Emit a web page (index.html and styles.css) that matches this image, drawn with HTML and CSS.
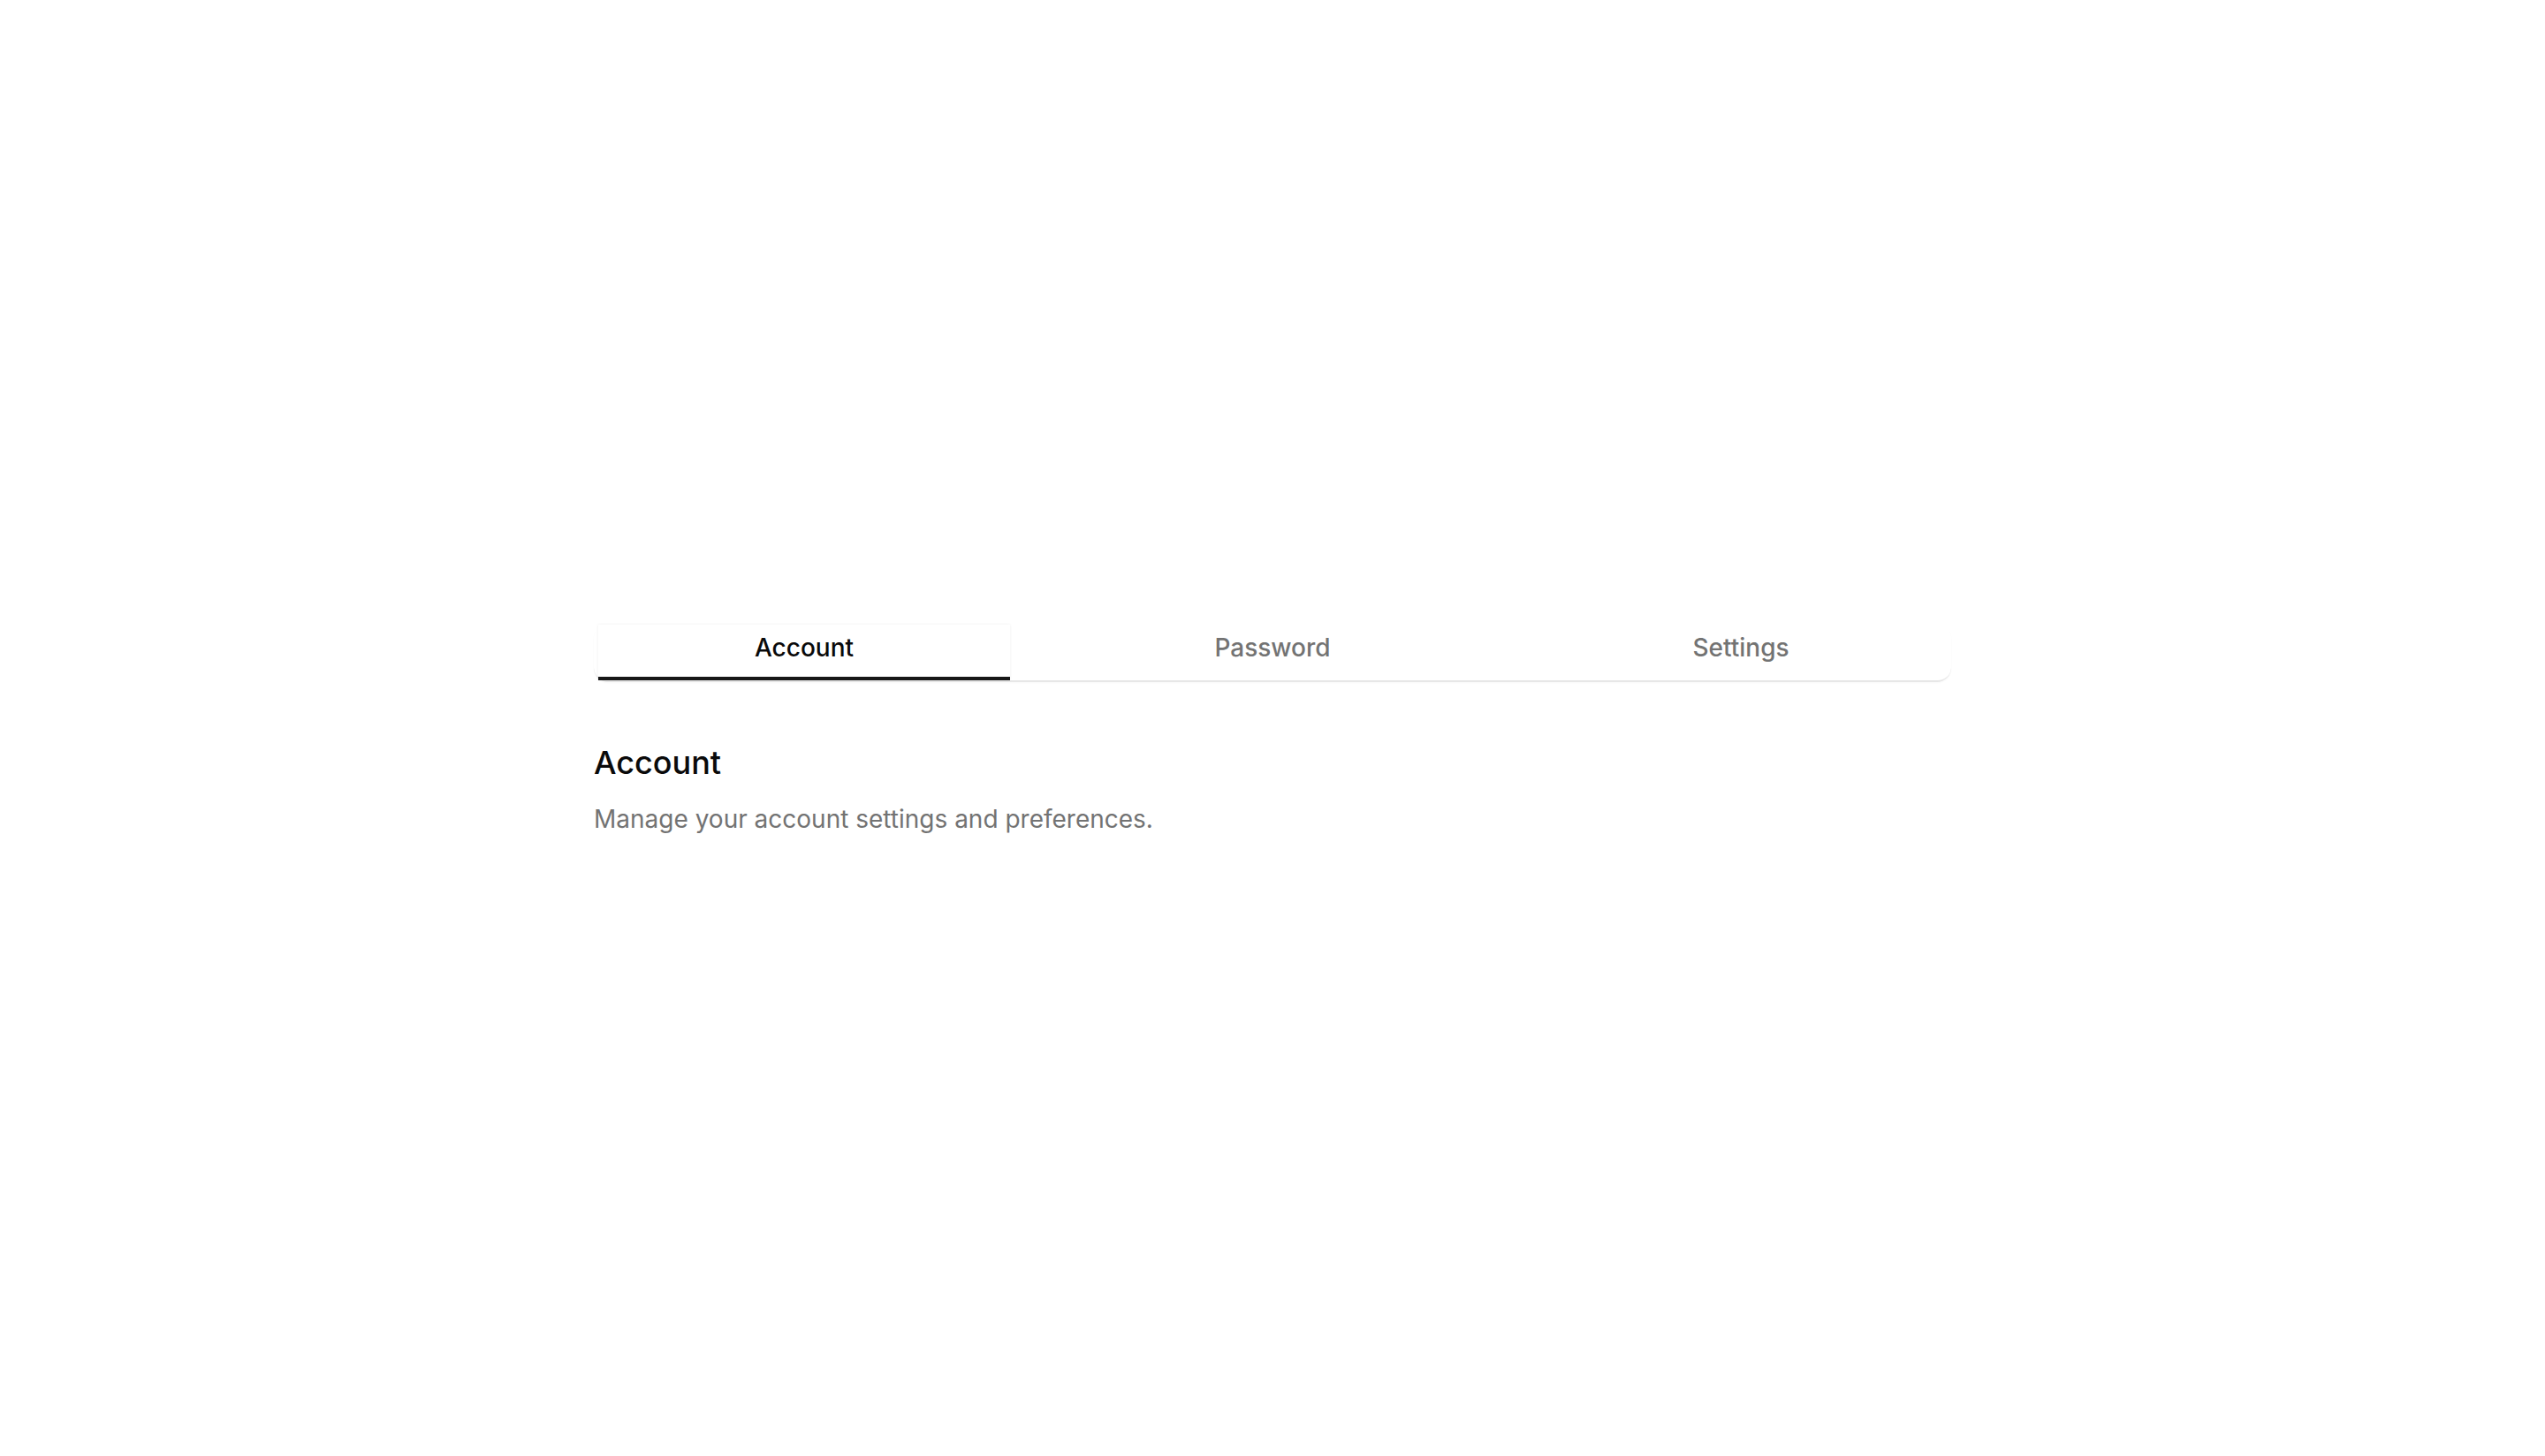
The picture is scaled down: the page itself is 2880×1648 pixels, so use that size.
FILE: index.html
```html
<!DOCTYPE html>
<html lang="en">
<head>
<meta charset="utf-8">
<title>Tabs</title>
<link rel="stylesheet" href="styles.css">
</head>
<body>
<main class="page">
  <div class="tabs">
    <div class="tab-list" role="tablist">
      <button class="tab tab-active" role="tab" aria-selected="true">Account</button>
      <button class="tab" role="tab" aria-selected="false">Password</button>
      <button class="tab" role="tab" aria-selected="false">Settings</button>
    </div>
    <section class="panel" role="tabpanel">
      <h2 class="panel-title">Account</h2>
      <p class="panel-desc">Manage your account settings and preferences.</p>
    </section>
  </div>
</main>
</body>
</html>
```
FILE: styles.css
```css
html, body {
  margin: 0;
  padding: 0;
  background: #ffffff;
}

body {
  font-family: Inter, "Liberation Sans", sans-serif;
  color: #0a0a0a;
}

.page {
  padding-top: 707px;
  display: flex;
  justify-content: center;
}

.tabs {
  width: 1536px;
  display: flex;
  flex-direction: column;
}

.tab-list {
  display: flex;
  gap: 64px;
  padding: 0 5px;
  border-bottom: 2px solid #e7e7e7;
  border-radius: 16px;
  box-shadow: 0 1px 2px rgba(0, 0, 0, 0.03);
}

.tab {
  flex: 1 1 0;
  appearance: none;
  background: transparent;
  border: 0;
  border-bottom: 4px solid transparent;
  margin: 0;
  padding: 6px 0 13px;
  font-family: inherit;
  font-size: 28px;
  font-weight: 500;
  line-height: 40px;
  color: #737373;
  text-align: center;
  cursor: pointer;
}

.tab-active {
  color: #0a0a0a;
  background: #ffffff;
  border-bottom-color: #171717;
  box-shadow: 0 0 3px rgba(0, 0, 0, 0.07);
}

.panel {
  margin-top: 63px;
}

.panel-title {
  margin: 0;
  font-size: 36px;
  font-weight: 500;
  line-height: 56px;
  color: #0a0a0a;
}

.panel-desc {
  margin: 16px 0 0;
  font-size: 28px;
  font-weight: 400;
  line-height: 40px;
  color: #737373;
}
```
